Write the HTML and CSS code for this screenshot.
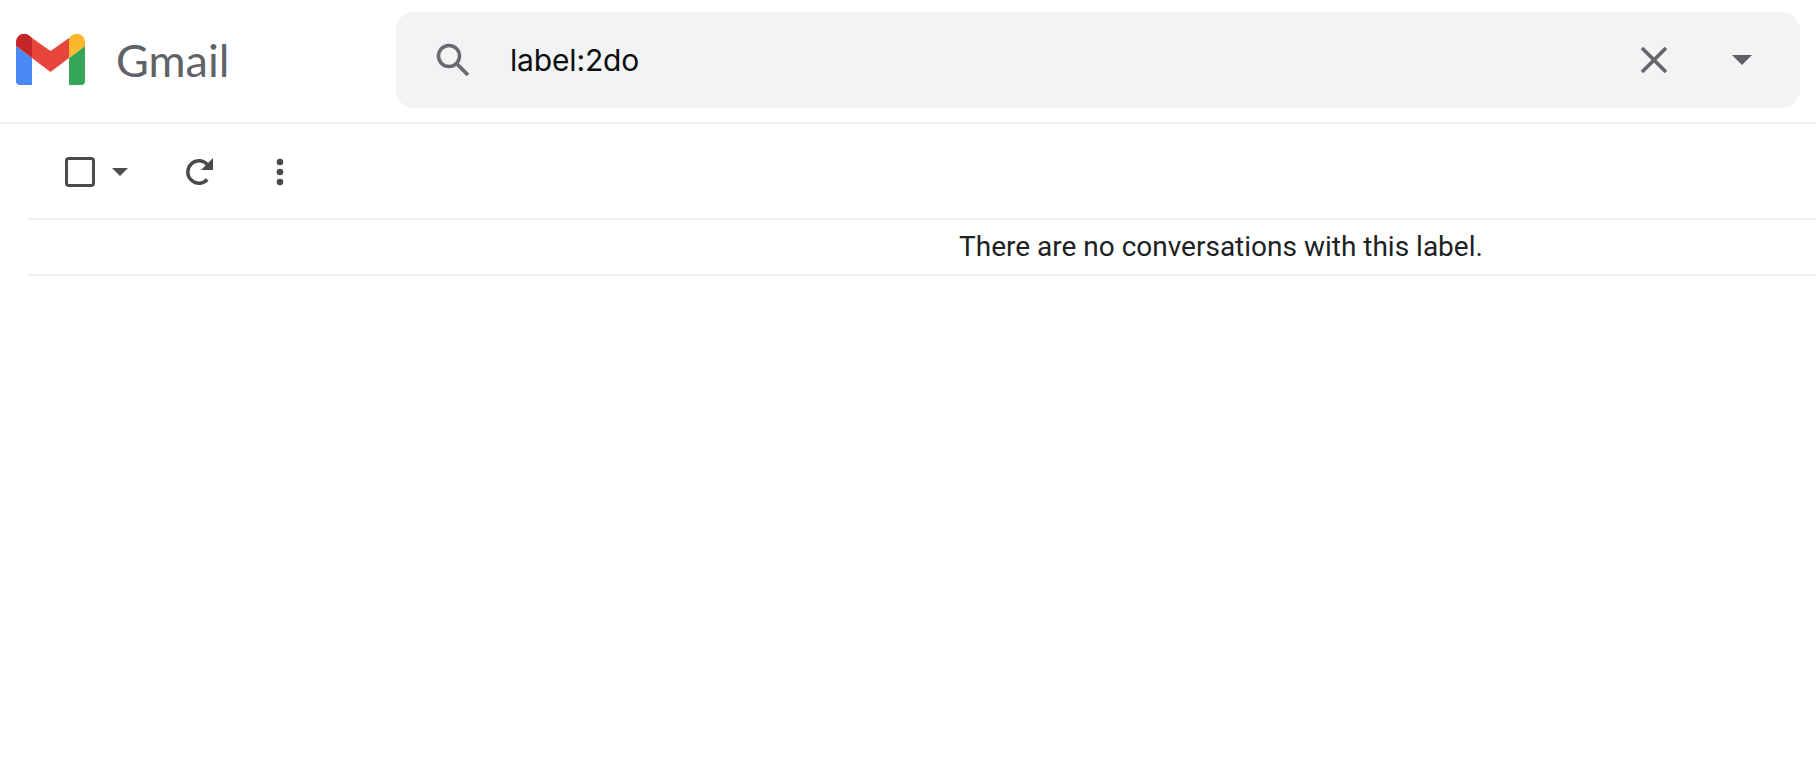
FILE: index.html
```html
<!DOCTYPE html>
<html lang="en">
<head>
<meta charset="utf-8">
<title>Gmail</title>
<link rel="stylesheet" href="styles.css">
</head>
<body>
<header class="header">
  <div class="brand">
    <svg class="logo" viewBox="0 0 69 52" width="69" height="52">
      <path fill="#4a8af4" d="M0 13 L16 25 V52 H4 A4 4 0 0 1 0 48 z"/>
      <path fill="#36a656" d="M53 25 L69 13 V48 A4 4 0 0 1 65 52 H53 z"/>
      <path fill="#fbb82e" d="M53 5 C59 -3 69 1 69 9 V13 L53 25 z"/>
      <path fill="#e8453c" d="M16 5 L34.500 18 L53 5 V25 L34.500 39 L16 25 z"/>
      <path fill="#c5262a" d="M0 9 C0 1 10 -3 16 5 V25 L0 13 z"/>
    </svg>
    <span class="wordmark">Gmail</span>
  </div>
  <div class="search">
    <svg class="icon-search" viewBox="0 0 36 36" width="36" height="36">
      <circle cx="14" cy="14" r="10.500" fill="none" stroke="#696a6d" stroke-width="3.500"/>
      <path d="M21.500 21.500 L33 33" fill="none" stroke="#696a6d" stroke-width="3.800"/>
    </svg>
    <span class="query">label:2do</span>
    <svg class="icon-clear" viewBox="0 0 30 30" width="30" height="30">
      <path d="M3 3 L27 27 M27 3 L3 27" fill="none" stroke="#646568" stroke-width="3.600"/>
    </svg>
    <svg class="icon-caret" viewBox="0 0 20 10" width="20" height="10">
      <path d="M0 0 H20 L10 10 z" fill="#5f6063"/>
    </svg>
  </div>
</header>
<main class="content">
  <div class="toolbar">
    <span class="checkbox"></span>
    <svg class="caret-small" viewBox="0 0 16 8" width="16" height="8">
      <path d="M0 0 H16 L8 8 z" fill="#4d4d4d"/>
    </svg>
    <svg class="refresh" viewBox="0 0 28 28" width="28" height="28">
      <path d="M21.300 21.500 A11.200 11.200 0 1 1 21.300 6.500" fill="none" stroke="#4a4a4a" stroke-width="3.400"/>
      <path d="M27 0 V12 H15 z" fill="#4a4a4a"/>
    </svg>
    <svg class="dots" viewBox="0 0 8 28" width="8" height="28">
      <circle cx="4" cy="4" r="3.300" fill="#4a4a4a"/>
      <circle cx="4" cy="14" r="3.300" fill="#4a4a4a"/>
      <circle cx="4" cy="24" r="3.300" fill="#4a4a4a"/>
    </svg>
  </div>
  <div class="empty">There are no conversations with this label.</div>
</main>
</body>
</html>
```
FILE: styles.css
```css
* { box-sizing: border-box; }
html, body { margin: 0; height: 100%; background: #fff; overflow: hidden; }
body { font-family: Roboto, "Liberation Sans", sans-serif; }

.header {
  display: flex;
  align-items: center;
  height: 124px;
  padding: 0 16px 2px 16px;
  border-bottom: 2px solid #eeeeee;
}
.brand { display: flex; align-items: center; width: 380px; flex: none; }
.logo { flex: none; margin-top: -2px; }
.wordmark {
  margin-left: 31px;
  font-family: Lato, sans-serif;
  font-size: 45px;
  color: #5f6368;
  line-height: 1;
}
.search {
  flex: 1;
  display: flex;
  align-items: center;
  height: 96px;
  background: #f1f3f4;
  border-radius: 18px;
  padding: 0 48px 0 39px;
}
.icon-search { flex: none; }
.query {
  flex: 1;
  margin-left: 39px;
  font-family: Inter, sans-serif;
  font-size: 30px;
  letter-spacing: -0.15px;
  color: #0c0c0c;
}
.icon-clear { flex: none; margin-right: 63px; }
.icon-caret { flex: none; }

.content { padding-left: 28px; }
.toolbar {
  display: flex;
  align-items: center;
  height: 96px;
  padding: 2px 0 0 37px;
  border-bottom: 2px solid #eeeeee;
}
.checkbox {
  width: 30px;
  height: 30px;
  border: 3.500px solid #4a4a4a;
  border-radius: 4px;
  flex: none;
}
.caret-small { margin-left: 17px; flex: none; }
.refresh { margin-left: 58px; flex: none; }
.dots { margin-left: 62px; flex: none; }
.empty {
  height: 56px;
  display: flex;
  align-items: center;
  padding: 0 0 2px 931px;
  font-size: 28px;
  color: #202124;
  border-bottom: 2px solid #eeeeee;
}
```
